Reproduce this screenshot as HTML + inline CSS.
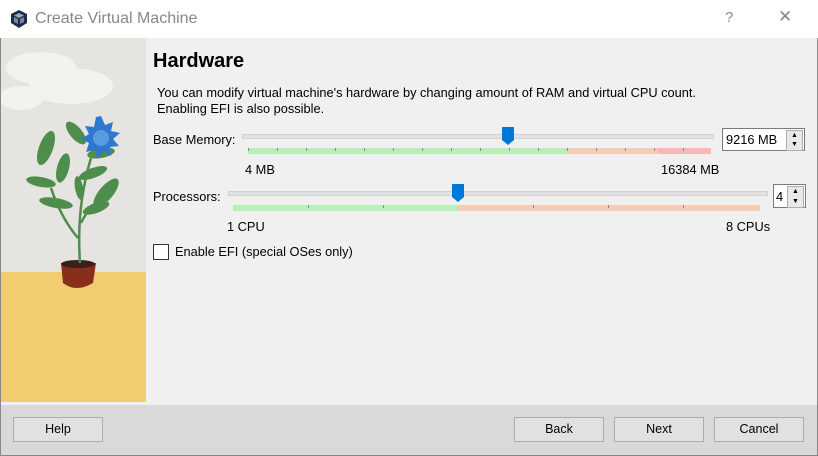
<!DOCTYPE html><html><head><style>
body{margin:0;width:818px;height:456px;overflow:hidden;background:#f0f0f0;font-family:"Liberation Sans",sans-serif;font-size:12.8px;color:#000;position:relative}
.a{position:absolute}
.btn{position:absolute;top:417px;width:88px;height:23px;border:1px solid #adadad;background:#e1e1e1;text-align:center;line-height:23px;font-size:12.5px}
.tk{position:absolute;width:1px;height:3px;background:#8a8a8a;top:0}
</style></head><body>
<div class="a" style="left:0;top:0;width:818px;height:38px;background:#fff"></div>
<svg class="a" style="left:9px;top:9px" width="20" height="20" viewBox="0 0 20 20"><path d="M10 1 L18 5 L18 14 L10 19 L2 14 L2 5Z" fill="#1c2c4c"/><path d="M10 4 L15 6.5 L10 9 L5 6.5Z" fill="#9ab"/><path d="M5 8 L9 10 L9 15 L5 13Z M11 10 L15 8 L15 13 L11 15Z" fill="#789"/></svg>
<div class="a" style="left:35px;top:10px;font-size:16px;color:#888">Create Virtual Machine</div>
<div class="a" style="left:725px;top:9px;font-size:15px;color:#888">?</div>
<div class="a" style="left:778px;top:7px;font-size:17px;color:#888">✕</div>
<div class="a" style="left:0;top:38px;width:1px;height:418px;background:#888"></div>
<div class="a" style="left:817px;top:38px;width:1px;height:418px;background:#888"></div>
<svg class="a" style="left:1px;top:38px" width="145" height="364" viewBox="0 0 145 364">
<rect width="145" height="364" fill="#e6e4e1"/>
<rect y="234" width="145" height="130" fill="#f1cd70"/>
<ellipse cx="40" cy="30" rx="35" ry="16" fill="#f3f2ef"/><ellipse cx="70" cy="48" rx="42" ry="18" fill="#f3f2ef"/><ellipse cx="20" cy="60" rx="22" ry="12" fill="#f3f2ef"/>
<path d="M60 225 L95 225 L92 245 Q75 255 62 245Z" fill="#8a2e1c"/>
<ellipse cx="77" cy="226" rx="17" ry="4" fill="#3a2018"/>
<path d="M79 225 Q75 170 90 120 M77 200 Q60 180 50 150 M80 185 Q90 165 100 165" stroke="#4f8d4d" stroke-width="2.5" fill="none"/>
<g fill="#4f8d4d"><ellipse cx="45" cy="110" rx="7" ry="18" transform="rotate(20 45 110)"/><ellipse cx="62" cy="130" rx="6" ry="15" transform="rotate(15 62 130)"/><ellipse cx="40" cy="144" rx="15" ry="5" transform="rotate(10 40 144)"/><ellipse cx="55" cy="165" rx="17" ry="5" transform="rotate(10 55 165)"/><ellipse cx="100" cy="115" rx="14" ry="5" transform="rotate(-10 100 115)"/><ellipse cx="92" cy="135" rx="15" ry="5" transform="rotate(-20 92 135)"/><ellipse cx="105" cy="155" rx="7" ry="18" transform="rotate(40 105 155)"/><ellipse cx="95" cy="170" rx="14" ry="5" transform="rotate(-20 95 170)"/><ellipse cx="75" cy="95" rx="6" ry="14" transform="rotate(-40 75 95)"/><ellipse cx="78" cy="150" rx="4" ry="12" transform="rotate(-10 78 150)"/></g>
<polygon points="100,78 104,87 112,84 110,93 119,95 112,101 118,108 109,109 110,118 102,113 97,121 94,112 85,114 88,105 80,101 88,96 84,88 93,89 95,79" fill="#2f77cf"/>
<circle cx="100" cy="100" r="8" fill="#5a9ae0"/>
</svg>
<div class="a" style="left:153px;top:50px;font-size:20px;font-weight:bold">Hardware</div>
<div class="a" style="left:157px;top:85px;line-height:16px">You can modify virtual machine's hardware by changing amount of RAM and virtual CPU count.<br>Enabling EFI is also possible.</div>
<div class="a" style="left:153px;top:132px">Base Memory:</div>
<div class="a" style="left:242px;top:134px;width:470px;height:3px;background:#e2e2e2;border:1px solid #d2d2d2"></div>
<div class="a" style="left:248px;top:148px;width:463px;height:6px;background:linear-gradient(90deg,#b8f0b8 0 320px,#f5ccb4 320px 410px,#f5b8b8 410px)">
<div class="tk" style="left:0"></div><div class="tk" style="left:29px"></div><div class="tk" style="left:58px"></div><div class="tk" style="left:87px"></div><div class="tk" style="left:116px"></div><div class="tk" style="left:145px"></div><div class="tk" style="left:174px"></div><div class="tk" style="left:203px"></div><div class="tk" style="left:232px"></div><div class="tk" style="left:261px"></div><div class="tk" style="left:290px"></div><div class="tk" style="left:319px"></div><div class="tk" style="left:348px"></div><div class="tk" style="left:377px"></div><div class="tk" style="left:406px"></div><div class="tk" style="left:435px"></div></div>
<svg class="a" style="left:502px;top:127px" width="12" height="18"><path d="M0 0H12V13L6 18L0 13Z" fill="#0078d7"/></svg>
<div class="a" style="left:245px;top:162px">4 MB</div>
<div class="a" style="left:661px;top:162px">16384 MB</div>
<div class="a" style="left:722px;top:128px;width:81px;height:21px;border:1px solid #7a7a7a;background:#fff"><span style="position:absolute;left:3px;top:3px">9216 MB</span><div style="position:absolute;right:1px;top:1px;width:15px;height:19px;border:1px solid #adadad;background:#e8e8e8;font-size:7px;line-height:9px;text-align:center">▲<br>▼</div></div>
<div class="a" style="left:153px;top:189px">Processors:</div>
<div class="a" style="left:228px;top:191px;width:538px;height:3px;background:#e2e2e2;border:1px solid #d2d2d2"></div>
<div class="a" style="left:233px;top:205px;width:527px;height:6px;background:linear-gradient(90deg,#b8f0b8 0 225px,#f5ccb4 225px)">
<div class="tk" style="left:75px"></div><div class="tk" style="left:150px"></div><div class="tk" style="left:300px"></div><div class="tk" style="left:375px"></div><div class="tk" style="left:450px"></div></div>
<svg class="a" style="left:452px;top:184px" width="12" height="18"><path d="M0 0H12V13L6 18L0 13Z" fill="#0078d7"/></svg>
<div class="a" style="left:227px;top:219px">1 CPU</div>
<div class="a" style="left:726px;top:219px">8 CPUs</div>
<div class="a" style="left:773px;top:184px;width:31px;height:22px;border:1px solid #7a7a7a;background:#fff"><span style="position:absolute;left:2px;top:4px">4</span><div style="position:absolute;right:1px;top:1px;width:15px;height:20px;border:1px solid #adadad;background:#e8e8e8;font-size:7px;line-height:10px;text-align:center">▲<br>▼</div></div>
<div class="a" style="left:153px;top:244px;width:14px;height:14px;border:1px solid #333;background:#fff"></div>
<div class="a" style="left:175px;top:244px">Enable EFI (special OSes only)</div>
<div class="a" style="left:1px;top:405px;width:816px;height:50px;background:#d9d9d9;border-bottom:1px solid #888"></div>
<div class="btn" style="left:13px">Help</div>
<div class="btn" style="left:514px">Back</div>
<div class="btn" style="left:614px">Next</div>
<div class="btn" style="left:714px">Cancel</div>
</body></html>
